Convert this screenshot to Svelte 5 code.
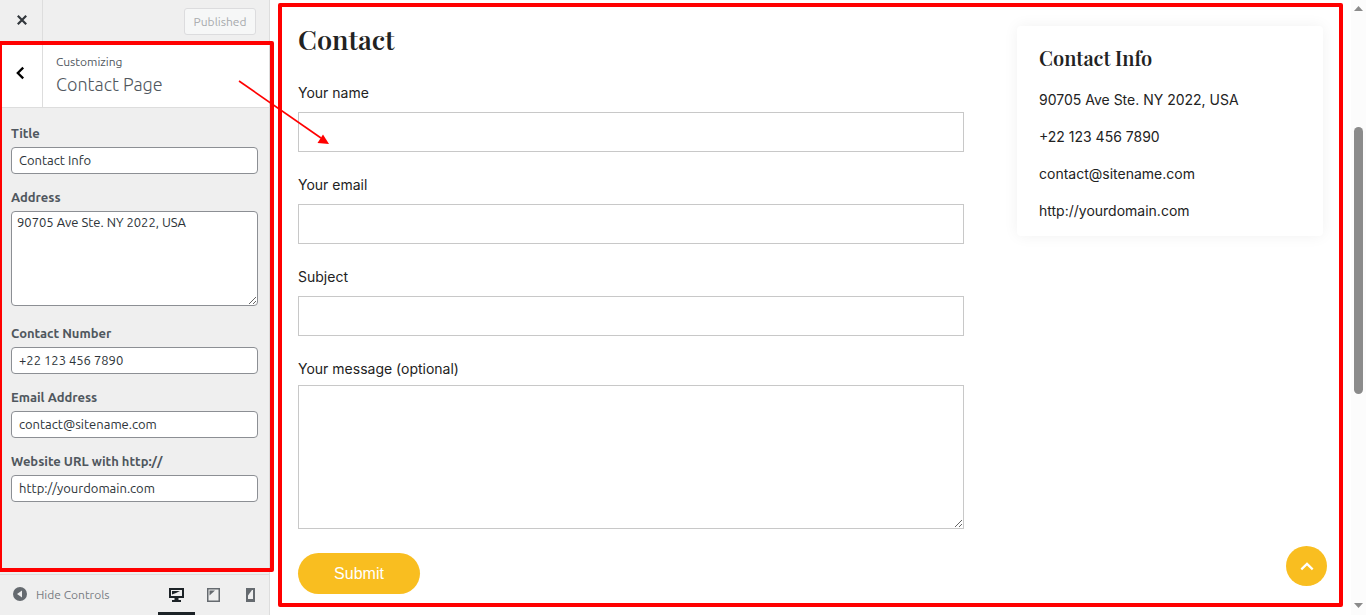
<script>
  // Theme customizer: control panel on the left, live preview on the right.

  let title = $state('Contact Info')
  let address = $state('90705 Ave Ste. NY 2022, USA')
  let phone = $state('+22 123 456 7890')
  let email = $state('contact@sitename.com')
  let website = $state('http://yourdomain.com')

  let device = $state('desktop')
  const devices = ['desktop', 'tablet', 'mobile']

  const fields = [
    { id: 'name', label: 'Your name', type: 'text' },
    { id: 'email', label: 'Your email', type: 'email' },
    { id: 'subject', label: 'Subject', type: 'text' },
  ]
</script>

<div class="customizer">
  <aside class="sidebar">
    <header class="actions">
      <button class="side-btn" aria-label="Close customizer">
        <svg width="12" height="12" viewBox="0 0 12 12" fill="none" stroke="#32373c" stroke-width="2.2"><path d="M1.8 1.8l8.4 8.4M10.2 1.8l-8.4 8.4" /></svg>
      </button>
      <button class="published" disabled>Published</button>
    </header>

    <div class="panel-head">
      <button class="side-btn" aria-label="Back">
        <svg width="12" height="14" viewBox="0 0 12 14" fill="none" stroke="#000" stroke-width="2.3"><path d="M8.2 1.6L2.8 7l5.4 5.4" /></svg>
      </button>
      <div class="panel-title">
        <span>Customizing</span>
        <h3>Contact Page</h3>
      </div>
    </div>

    <div class="controls">
      <div class="control">
        <label for="c-title">Title</label>
        <input id="c-title" type="text" bind:value={title} />
      </div>
      <div class="control tall">
        <label for="c-address">Address</label>
        <textarea id="c-address" spellcheck="false" bind:value={address}></textarea>
      </div>
      <div class="control">
        <label for="c-phone">Contact Number</label>
        <input id="c-phone" type="text" bind:value={phone} />
      </div>
      <div class="control">
        <label for="c-email">Email Address</label>
        <input id="c-email" type="text" bind:value={email} />
      </div>
      <div class="control">
        <label for="c-url">Website URL with http://</label>
        <input id="c-url" type="text" bind:value={website} />
      </div>
    </div>

    <footer class="footer">
      <button class="collapse">
        <svg width="14" height="14" viewBox="0 0 14 14"><circle cx="7" cy="7" r="7" fill="#656a6f" /><path d="M9 3.6v6.8L4 7z" fill="#eee" /></svg>
        Hide Controls
      </button>
      <div class="devices">
        {#each devices as d}
          <button class:active={device === d} aria-label={d} onclick={() => (device = d)}>
            {#if d === 'desktop'}
              <svg width="15" height="14" viewBox="0 0 15 14" fill="currentColor"><path fill-rule="evenodd" d="M0 0h15v10H9.5v2H12v2H3v-2h2.5v-2H0zM2 2v6h11V2z" /><path d="M3 3h8L7 5 3 6.500z" /></svg>
            {:else if d === 'tablet'}
              <svg width="13" height="14" viewBox="0 0 13 14" fill="currentColor"><path fill-rule="evenodd" d="M0 0h13v14H0zM1.500 1.500v11h10v-11z" /><path d="M2.500 2.500h5.500l-5.500 5z" /></svg>
            {:else}
              <svg width="9" height="14" viewBox="0 0 9 14" fill="currentColor"><path fill-rule="evenodd" d="M0 0h9v14H0zM2 2v9h5V2z" /><path d="M2 2h4L2 7.500z" /></svg>
            {/if}
          </button>
        {/each}
      </div>
    </footer>
  </aside>

  <main class="preview">
    <div class="page">
      <form onsubmit={(e) => e.preventDefault()}>
        <h1>Contact</h1>
        {#each fields as f}
          <div class="field">
            <label for={f.id}>{f.label}</label>
            <input id={f.id} type={f.type} />
          </div>
        {/each}
        <div class="field message">
          <label for="message">Your message (optional)</label>
          <textarea id="message"></textarea>
        </div>
        <button class="submit">Submit</button>
      </form>

      <section class="card">
        <h2>{title}</h2>
        <ul>
          <li>{address}</li>
          <li>{phone}</li>
          <li>{email}</li>
          <li>{website}</li>
        </ul>
      </section>
    </div>

    <div class="scrollbar" aria-hidden="true">
      <svg width="9" height="5" viewBox="0 0 9 5"><path d="M4.5 0L9 5H0z" fill="#8b8b8b" /></svg>
      <div class="track"><div class="thumb"></div></div>
      <svg width="9" height="5" viewBox="0 0 9 5"><path d="M0 0h9L4.5 5z" fill="#8b8b8b" /></svg>
    </div>

    <button class="to-top" aria-label="Back to top">
      <svg width="14" height="9" viewBox="0 0 14 9" fill="none" stroke="#fff" stroke-width="2.2"><path d="M1.300 7.400L7 1.900l5.700 5.500" /></svg>
    </button>
    <div class="frame frame-preview"></div>
  </main>

  <!-- tutorial markers -->
  <div class="frame frame-panel"></div>
  <svg class="arrow" width="92" height="66" viewBox="0 0 92 66">
    <path d="M1 1l82 57" stroke="#f00" stroke-width="1.6" fill="none" />
    <path d="M91 64l-11.500-1 5.500-8.500z" fill="#f00" />
  </svg>
</div>

<style>
  :global(body) { margin: 0; background: #fff; }
  * { box-sizing: border-box; }
  h1, h2, h3, ul { margin: 0; padding: 0; }
  button { font: inherit; margin: 0; padding: 0; border: none; background: none; cursor: pointer; }

  .customizer {
    position: relative; display: flex; height: 100vh; min-height: 600px; overflow: hidden;
  }

  /* Sidebar */
  .sidebar {
    display: flex; flex-direction: column; flex: 0 0 270px;
    background: #efefef; border-right: 1px solid #ddd; color: #50575e;
    font-family: Ubuntu, "Noto Sans", sans-serif; font-size: 12px;
  }
  .actions {
    display: flex; justify-content: space-between; align-items: center;
    height: 45px; padding-right: 13px; border-bottom: 1px solid #ddd;
  }
  .side-btn {
    display: flex; align-items: center; justify-content: center;
    align-self: stretch; width: 43px; border-right: 1px solid #ddd;
  }
  .actions .side-btn { padding: 0 0 4px 1px; }
  .panel-head .side-btn { padding-bottom: 6px; }
  .published {
    height: 27px; width: 72px; margin-bottom: 1px; border: 1px solid #dcdcde; border-radius: 3px;
    background: #f6f7f7; color: #a7aaad; font-size: 12px;
  }
  .panel-head {
    display: flex; height: 63px; background: #fff; border-bottom: 1px solid #ddd;
  }
  .panel-title { padding: 8px 0 0 13px; line-height: 18px; }
  .panel-title h3 { font-size: 18px; font-weight: 300; line-height: 27px; }
  .controls {
    flex: 1; display: flex; flex-direction: column; gap: 14px; padding: 16px 11px; font-size: 13px;
  }
  .control { display: flex; flex-direction: column; gap: 5px; }
  .control label { font-weight: 600; line-height: 18px; }
  .control input, .control textarea {
    width: 100%; margin: 0; border: 1px solid #8c8f94; border-radius: 4px; background: #fff;
    color: #2c3338; font: inherit; outline: none;
  }
  .control input { height: 27px; padding: 0 7px 2px; }
  .control textarea { height: 95px; padding: 1px 5px; line-height: 18px; }
  .tall { margin-bottom: 4px; }
  .footer {
    display: flex; justify-content: space-between; height: 41px; border-top: 1px solid #ddd;
  }
  .collapse { display: flex; align-items: center; gap: 9px; padding: 0 0 2px 13px; color: #787c82; }
  .devices { display: flex; }
  .devices button {
    display: flex; align-items: center; justify-content: center;
    width: 37px; padding-top: 3px; border-bottom: 3px solid transparent; color: #656a6f;
  }
  .devices .active { border-color: #1d2327; color: #1d2327; }

  /* Preview */
  .preview {
    position: relative; flex: 1; display: flex; min-width: 0;
    color: #222; font-family: Inter, sans-serif; font-size: 14px; line-height: 24px;
  }
  .page {
    flex: 1; display: grid; grid-template-columns: 37fr 17fr; column-gap: 53px;
    align-items: start; padding: 21px 28px 0;
  }
  h1, h2 { font-family: "Playfair Display", "Liberation Serif", serif; font-weight: 600; }
  h1 { font-size: 27px; line-height: 36px; margin-bottom: 24px; }
  .field { display: flex; flex-direction: column; gap: 7px; margin-bottom: 21px; }
  .field input, .field textarea {
    width: 100%; margin: 0; padding: 8px; border: 1px solid #c8c8c8; border-radius: 0;
    background: #fff; font: inherit; outline: none;
  }
  .field input { height: 40px; }
  .field textarea { height: 144px; }
  .message { gap: 4px; margin-bottom: 24px; }
  .submit {
    display: block; width: 122px; height: 41px; border-radius: 21px;
    background: #f9be20; color: #fff; font-family: "Liberation Sans", Arial, sans-serif; font-size: 16px;
  }
  .card {
    margin-top: 5px; padding: 18px 22px 13px; border-radius: 4px; background: #fff;
    box-shadow: 0 0 15px rgba(0, 0, 0, 0.06);
  }
  .card h2 { font-size: 20px; line-height: 28px; margin-bottom: 16px; }
  .card ul { display: flex; flex-direction: column; gap: 13px; list-style: none; }

  .scrollbar {
    display: flex; flex-direction: column; align-items: center; flex: 0 0 15px;
    padding: 6px 0 7px; background: #fcfcfc;
  }
  .track { flex: 1; width: 9px; padding: 116px 0; }
  .thumb { height: 267px; border-radius: 5px; background: #8b8b8b; }

  .to-top {
    position: absolute; right: 39px; bottom: 29px; width: 41px; height: 40px;
    display: flex; align-items: center; justify-content: center;
    border-radius: 50%; background: #f9be20;
  }

  /* Markers */
  .frame { position: absolute; border: 4px solid #f00; border-radius: 2px; pointer-events: none; }
  .frame-preview { inset: 3px 23px 8px 8px; }
  .frame-panel { left: -2px; top: 41px; width: 276px; bottom: 43px; }
  .arrow { position: absolute; left: 238px; top: 80px; pointer-events: none; }
</style>
